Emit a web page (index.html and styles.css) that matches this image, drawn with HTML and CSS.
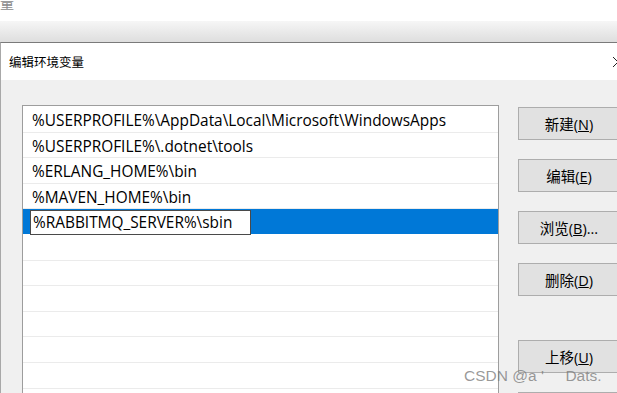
FILE: index.html
```html
<!DOCTYPE html>
<html>
<head>
    <meta charset="UTF-8">
    <title>编辑环境变量</title>
    <link rel="stylesheet" href="styles.css">
</head>
<body>
    <div class="backdrop">
        <div class="peek">量</div>
        <div class="band"></div>
    </div>

    <div class="dialog">
        <div class="titlebar">
            <span class="title">编辑环境变量</span>
            <svg class="close" width="12" height="12" viewBox="0 0 12 12">
                <path d="M1 1 L11 11 M11 1 L1 11" stroke="#222" stroke-width="1" fill="none"/>
            </svg>
        </div>

        <div class="body">
            <div class="list">
                <div class="row">%USERPROFILE%\AppData\Local\Microsoft\WindowsApps</div>
                <div class="row">%USERPROFILE%\.dotnet\tools</div>
                <div class="row">%ERLANG_HOME%\bin</div>
                <div class="row">%MAVEN_HOME%\bin</div>
                <div class="row selected">
                    <span class="editor">%RABBITMQ_SERVER%\sbin</span>
                </div>
                <div class="row"></div>
                <div class="row"></div>
                <div class="row"></div>
                <div class="row"></div>
                <div class="row"></div>
                <div class="row"></div>
                <div class="row"></div>
            </div>

            <div class="actions">
                <button>新建(<u>N</u>)</button>
                <button>编辑(<u>E</u>)</button>
                <button>浏览(<u>B</u>)...</button>
                <button>删除(<u>D</u>)</button>
                <button class="spaced">上移(<u>U</u>)</button>
                <button>下移(<u>O</u>)</button>
            </div>
        </div>
    </div>

    <div class="watermark">CSDN @a '     Dats.</div>
</body>
</html>
```

FILE: styles.css
```css
html, body {
    margin: 0;
    height: 393px;
    overflow: hidden;
    background: #fff;
    font-family: "Open Sans", "Noto Sans CJK SC", sans-serif;
}
.backdrop {
    height: 42px;
    overflow: hidden;
}
.peek {
    height: 27px;
    margin-top: -6px;
    font-family: "Noto Sans CJK SC", sans-serif;
    font-size: 14px;
    line-height: 16px;
    color: #8a8a8a;
}
.band {
    height: 21px;
    background: linear-gradient(#f6f6f6, #dedede);
}
.dialog {
    border-top: 1px solid #7a7a7a;
    border-left: 1px solid #a8a8a8;
}
.titlebar {
    height: 37px;
    background: #fff;
    display: flex;
    align-items: center;
    justify-content: space-between;
    padding-left: 8px;
}
.title {
    font-family: "Noto Sans CJK SC", sans-serif;
    font-size: 12.5px;
    color: #000;
}
.close {
    margin-right: -7px;
}
.body {
    background: #f0f0f0;
    display: flex;
    align-items: flex-start;
    padding: 25px 0 0 21px;
    height: 300px;
    overflow: hidden;
}
.list {
    flex: none;
    width: 475px;
    padding-top: 1px;
    border: 1px solid #9d9d9d;
    background: #fff;
}
.row {
    height: 25.6px;
    box-sizing: border-box;
    border-bottom: 1px solid #ebebeb;
    padding: 2px 0 0 9px;
    font-size: 15.4px;
    line-height: 23px;
    color: #000;
    white-space: nowrap;
}
.row.selected {
    background: #0078d7;
    padding: 0 0 0 7px;
    border-bottom-color: #fff;
}
.editor {
    display: inline-block;
    box-sizing: border-box;
    width: 221px;
    height: 25px;
    margin-top: 1px;
    padding: 1px 0 0 2px;
    background: #fff;
    border: 1px solid #4a4a4a;
    line-height: 22px;
}
.actions {
    flex: none;
    display: flex;
    flex-direction: column;
    gap: 19px;
    margin-left: 19px;
    padding-top: 2px;
}
button {
    width: 102px;
    height: 33px;
    flex: none;
    background: #e1e1e1;
    border: 1px solid #adadad;
    font-family: "Open Sans", "Noto Sans CJK SC", sans-serif;
    font-size: 14.5px;
    color: #000;
    padding: 0;
}
button.spaced {
    margin-top: 25px;
}
.watermark {
    position: absolute;
    left: 464px;
    top: 367px;
    font-family: "Liberation Sans", sans-serif;
    font-size: 15.5px;
    color: rgba(120, 120, 120, 0.75);
    white-space: pre;
}
```
